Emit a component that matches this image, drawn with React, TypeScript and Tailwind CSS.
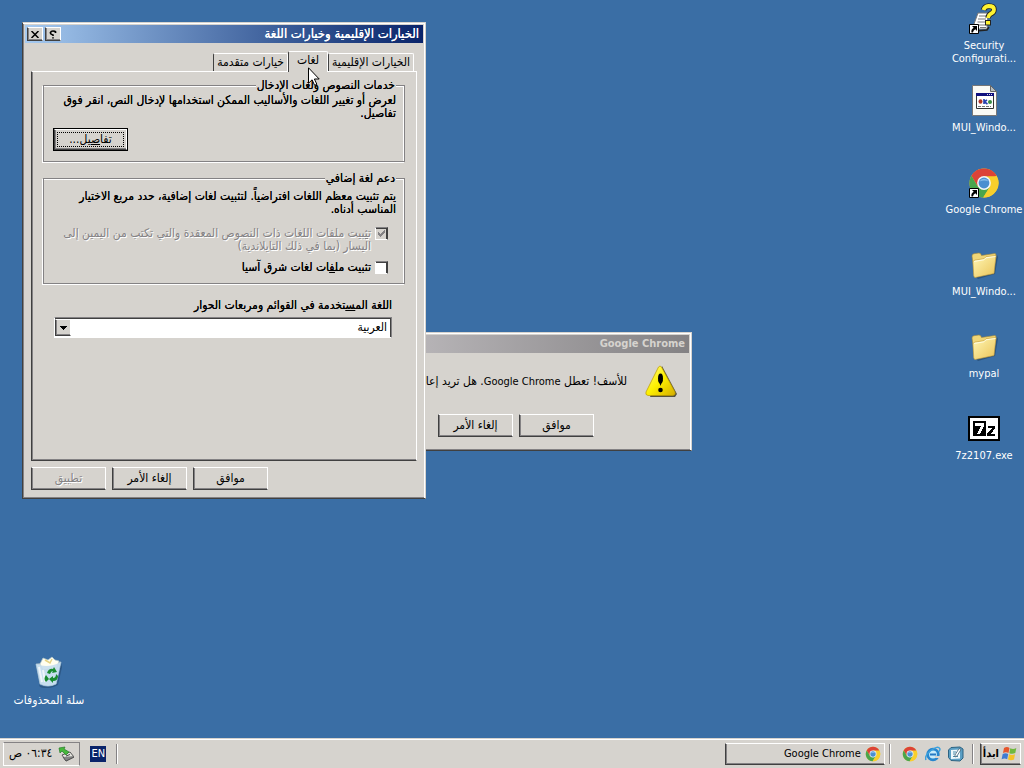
import React, { useState } from "react";

const raised =
  "bg-[#d6d3ce] border border-t-white border-r-white border-b-[#404040] border-l-[#404040] shadow-[inset_1px_-1px_0_#848284]";

function DialogButton({
  children,
  disabled,
  focused,
}: {
  children: React.ReactNode;
  disabled?: boolean;
  focused?: boolean;
}) {
  if (focused) {
    return (
      <button type="button" className="h-[23px] w-[75px] border border-black bg-black">
        <span className={`${raised} flex h-full items-center justify-center p-[2px]`}>
          <span className="flex h-full w-full items-center justify-center border border-dotted border-black">
            {children}
          </span>
        </span>
      </button>
    );
  }
  return (
    <button
      type="button"
      disabled={disabled}
      className={`${raised} flex h-[23px] w-[75px] items-center justify-center disabled:text-[#848284] disabled:[text-shadow:1px_1px_0_white]`}
    >
      {children}
    </button>
  );
}

function GroupBox({ title, children }: { title: string; children: React.ReactNode }) {
  return (
    <fieldset className="min-w-0 border border-[#848284] px-2 shadow-[-1px_1px_0_white,inset_-1px_1px_0_white]">
      <legend className="relative bg-[#d6d3ce] px-px leading-[13px]">{title}</legend>
      {children}
    </fieldset>
  );
}

function CheckRow({
  id,
  checked,
  disabled,
  children,
}: {
  id: string;
  checked?: boolean;
  disabled?: boolean;
  children: React.ReactNode;
}) {
  return (
    <div className="flex items-start gap-1">
      <span className="relative flex h-[13px] w-[13px] shrink-0">
        <input
          id={id}
          type="checkbox"
          defaultChecked={checked}
          disabled={disabled}
          className="peer h-[13px] w-[13px] appearance-none border border-b-white border-l-white border-r-[#404040] border-t-[#848284] bg-white shadow-[inset_-1px_1px_0_#404040] disabled:bg-[#d6d3ce]"
        />
        <svg
          viewBox="0 0 13 13"
          className="pointer-events-none absolute inset-0 hidden h-[13px] w-[13px] peer-checked:block"
          shapeRendering="crispEdges"
        >
          <path d="M3 5v3l2 2 5-5V2L5 7z" fill={disabled ? "#848284" : "#000"} />
        </svg>
      </span>
      <label
        htmlFor={id}
        className={disabled ? "whitespace-nowrap text-[#848284] [text-shadow:1px_1px_0_white]" : "whitespace-nowrap"}
      >
        {children}
      </label>
    </div>
  );
}

function ChromeLogo({ className }: { className: string }) {
  return (
    <svg viewBox="0 0 32 32" className={className}>
      <circle cx="16" cy="16" r="14.5" fill="#f8cf2c" />
      <path d="M16 16 28.6 8.8A14.5 14.5 0 0 0 3.4 8.8L9.8 19.6z" fill="#dc4337" />
      <path d="M3.4 8.8A14.5 14.5 0 0 0 15.2 30.5L22.2 19.6H9.8z" fill="#4aa54c" />
      <path d="M16 9.2H28.8A14.5 14.5 0 0 1 15.2 30.5L22 19.4z" fill="#f8cf2c" />
      <circle cx="16" cy="16" r="6.9" fill="#f2f5f8" />
      <circle cx="16" cy="16" r="5.4" fill="#4a8fd0" />
      <path d="M11.5 14.5a5 5 0 0 1 9 0q-4-2-9 0z" fill="#86bdea" />
    </svg>
  );
}

function ShortcutArrow() {
  return (
    <g>
      <path d="M1.500 21.500h9v9h-9z" fill="#fff" stroke="#000" />
      <path d="M4 23h5v5l-1.700-1.700Q5 27.500 5 29.500H3.500q-.800-3 2.200-4.800z" fill="#000" />
    </g>
  );
}

function SecurityIcon() {
  return (
    <svg viewBox="0 0 32 32" className="h-8 w-8">
      <path d="M10 10h10l-1 16H6v-5z" fill="#fff" stroke="#777" />
      <path d="M11 13h7M10 16h8M9.500 19h8M9 22h8M12 24.500h6" stroke="#777" />
      <path d="m8 28 11-1 2-3" fill="none" stroke="#222" strokeWidth="1.500" />
      <path
        d="M15.500 7q1-3.500 5-4 5.500 0 5.500 3.500 0 3-3.500 4.500-2 1-2.500 4"
        fill="none"
        stroke="#222"
        strokeWidth="5.500"
      />
      <path
        d="M15.500 7q1-3.500 5-4 5.500 0 5.500 3.500 0 3-3.500 4.500-2 1-2.500 4"
        fill="none"
        stroke="#fff332"
        strokeWidth="3.800"
      />
      <rect x="17.500" y="17.500" width="5" height="4.500" fill="#fff332" stroke="#222" />
      <ShortcutArrow />
    </svg>
  );
}

function SettingsFileIcon() {
  return (
    <svg viewBox="0 0 32 32" className="h-8 w-8">
      <path d="M4.500.5h18l6 6v24h-24z" fill="#fafaf5" stroke="#777" />
      <path d="M22.500.5v6h6z" fill="#b8bfc0" stroke="#666" />
      <path d="M8.500 8.500h17v15h-17z" fill="#fff" stroke="#333" />
      <path d="M8 8h18v3H8z" fill="#10107e" />
      <path d="M19 9.500h1M21 9.500h1M23 9.500h1" stroke="#ddd" />
      <ellipse cx="12.500" cy="16.500" rx="2" ry="2.300" fill="#b03528" />
      <path d="M16 14v5M16 17l3-2M16.500 17l3 2" stroke="#263fb0" strokeWidth="1.600" />
      <circle cx="22" cy="17" r="2" fill="#368b42" />
      <path d="M10 21.500h13" stroke="#777" strokeDasharray="3 1" />
    </svg>
  );
}

function ChromeShortcut() {
  return (
    <span className="relative block h-8 w-8">
      <ChromeLogo className="h-8 w-8" />
      <svg viewBox="0 0 32 32" className="absolute inset-0 h-8 w-8">
        <ShortcutArrow />
      </svg>
    </span>
  );
}

function FolderIcon() {
  return (
    <svg viewBox="0 0 32 32" className="h-8 w-8">
      <defs>
        <linearGradient id="folder" x1="0" y1="0" x2="1" y2="1">
          <stop offset="0" stopColor="#fff7b5" />
          <stop offset="1" stopColor="#eac357" />
        </linearGradient>
      </defs>
      <path d="M8 28 25 23 29 6 30 8 27 25 10 30z" fill="#24496f" opacity=".7" />
      <path d="M4 7q0-2 2-2.300L11 4q2 0 2.500 2.500L27 4.500q1 0 1 2L25 23 7 28z" fill="#f0d677" stroke="#a98935" strokeWidth=".6" />
      <path d="M5 12.500 7 11l9-1.300 2-2L28 6.500l-2 18L7 28.500q-1 0-1.300-2z" fill="url(#folder)" stroke="#c39c3d" strokeWidth=".6" />
      <path d="M6 12.500l10-1.700 2-2 9.500-1.300" stroke="#fffce0" fill="none" />
    </svg>
  );
}

function SevenZipIcon() {
  return (
    <svg viewBox="0 0 32 32" className="h-8 w-8" shapeRendering="crispEdges">
      <path d="M0 3h32v25H0z" fill="#000" />
      <path d="M2 5h28v21H2z" fill="#fff" />
      <path d="M5 8h13v15H5z" fill="#000" />
      <path d="M7 10h9v3l-4 8H9l4-8H7z" fill="#fff" />
      <path d="M20 13h7v2l-4 6h4v2h-8v-2l5-6h-4z" fill="#000" />
    </svg>
  );
}

function RecycleBin() {
  return (
    <svg viewBox="0 0 32 32" className="h-8 w-8">
      <path d="M6 29q10 4 18-1l4-21 1 4-4 18q-9 5-18 2z" fill="#234a72" opacity=".6" />
      <path d="M3 8 28 6 23 28Q15 32 7 28z" fill="#d5e6ef" stroke="#8eabc1" />
      <path d="M7 8 10 2l5 2 4-3 3 3 4 1-2 7-14 2z" fill="#fffef0" stroke="#b8c8c8" strokeWidth=".7" />
      <path d="M12 4l5 3 2-4" stroke="#e5d383" fill="none" strokeWidth="1.500" />
      <path d="M3 8q12 5 25-2l-5 22q-8 4-16 0z" fill="#c3dcee" opacity=".85" />
      <path d="m6 11 3 15M10 14l2 12" stroke="#fff" strokeWidth="2" opacity=".7" />
      <path d="M14 17q2-5 6-4l1-2 3 5-5 1 1-2q-2 0-3 3zM23 18l2 2q0 5-5 5v2l-4-4 4-3v2q3 0 3-4zM13 19l3 4-3 3q-3-3 0-7z" fill="#198b30" />
    </svg>
  );
}

function WarningIcon() {
  return (
    <svg viewBox="0 0 32 32" className="h-8 w-8">
      <defs>
        <linearGradient id="warn" x1="0" y1="0" x2="1" y2="1">
          <stop offset="0" stopColor="#fffb8a" />
          <stop offset=".5" stopColor="#fdf000" />
          <stop offset="1" stopColor="#d5ac00" />
        </linearGradient>
      </defs>
      <path d="M17 1 32 29 30 32H5z" fill="#55523e" />
      <path d="M13.500 2q1.500-2 3 0L30 27q1 3-2 3.500H3Q0 30 1 27z" fill="url(#warn)" stroke="#b99a00" strokeWidth=".7" />
      <ellipse cx="15.500" cy="13.500" rx="2.500" ry="5" fill="#000" />
      <path d="m13.500 15 2 6 2-6z" fill="#000" />
      <circle cx="15.500" cy="25" r="2.300" fill="#000" />
    </svg>
  );
}

function ExplorerIcon() {
  return (
    <svg viewBox="0 0 16 16" className="h-4 w-4">
      <circle cx="8" cy="8.500" r="5.300" fill="#c7ecfb" stroke="#2786ce" strokeWidth="2.800" />
      <path d="M5 7.500h6v2H5z" fill="#2579c3" />
      <path d="M10 10h5v2h-5z" fill="#d6d3ce" />
      <path d="M1 14Q-1 10 6 4.500T15 3q0 1-1 2.500" fill="none" stroke="#3aa0dd" strokeWidth="1.500" />
    </svg>
  );
}

function ShowDesktopIcon() {
  return (
    <svg viewBox="0 0 16 16" className="h-4 w-4">
      <path d="M3 1.500 12 1l3 2v9l-3 3-9-.500-2.500-3V4z" fill="#5b9fc4" stroke="#2c6382" />
      <path d="M3 4 12 3.500v9L3 13z" fill="#eef8fb" />
      <path d="M5 6h3M5 8h2M5 10.500h5" stroke="#4a8cac" />
      <path d="m7 9 4-6.500 2 1-4 6.500-2 1z" fill="#fff" stroke="#385d72" strokeWidth=".8" />
    </svg>
  );
}

function WindowsFlag() {
  return (
    <svg viewBox="0 0 18 16" className="h-4 w-[18px]">
      <path d="M4 2q3-2 5.500 0L8.500 7Q6 5.500 3 7z" fill="#e6552c" />
      <path d="M10.300 2.300q3 1.500 6-.3l-1 5q-3 1.500-6 .2z" fill="#6fb93d" />
      <path d="M2.700 8q3-1.600 5.500 0l-1 5.300q-2.500-1.600-5.600 0z" fill="#3f7bd2" />
      <path d="M9 8.300q3 1.500 6 0L14 13.600q-3 1.500-6 0z" fill="#f4c227" />
    </svg>
  );
}

function RemoveHardwareIcon() {
  return (
    <svg viewBox="0 0 16 16" className="h-4 w-4">
      <path d="m4 9 8-3 4 5-8 4z" fill="#e6e6df" stroke="#555" />
      <path d="m5 11 3 4 8-4v-1" fill="#858585" stroke="#444" strokeWidth=".7" />
      <path d="m8 10 4-1.500" stroke="#444" />
      <path d="M1 2 7 1l-1 2 5 3-3 3-4-4-2 2z" fill="#47b83b" stroke="#257b28" strokeWidth=".7" />
    </svg>
  );
}

function DesktopItem({ icon, label, arabic }: { icon: React.ReactNode; label: string; arabic?: boolean }) {
  return (
    <a href="#" className="flex h-[82px] w-[76px] flex-col items-center gap-1 text-center text-white">
      {icon}
      <span dir="auto" className={arabic ? "whitespace-nowrap text-[12px] leading-4" : "leading-[13px]"}>
        {label}
      </span>
    </a>
  );
}

function Separator() {
  return <span className="block h-5 w-[2px] shrink-0 border-l border-r border-l-[#848284] border-r-white" />;
}

const tabs = ["الخيارات الإقليمية", "لغات", "خيارات متقدمة"];

function RegionalDialog() {
  const [active, setActive] = useState(1);
  const winFrame =
    "border border-b-[#404040] border-l-[#404040] border-r-[#d6d3ce] border-t-[#d6d3ce] shadow-[inset_-1px_1px_0_white,inset_1px_-1px_0_#848284]";
  return (
    <section
      dir="rtl"
      aria-label="الخيارات الإقليمية وخيارات اللغة"
      className={`absolute left-[22px] top-[22px] w-[404px] bg-[#d6d3ce] p-[2px] text-[12px] leading-[13px] [text-shadow:0_0_0_currentColor] ${winFrame}`}
    >
      <header className="flex h-[18px] items-center gap-[2px] bg-linear-to-l from-[#0a246a] to-[#a6caf0] px-[2px]">
        <h1 className="flex-1 px-[2px] text-[13px] leading-[18px] text-white">الخيارات الإقليمية وخيارات اللغة</h1>
        <button type="button" aria-label="تعليمات" className={`${raised} flex h-[14px] w-4 items-center justify-center`}>
          <svg viewBox="0 0 8 9" className="h-[9px] w-2">
            <path d="M6.500 3V1.800Q6 1 4 1T1.500 2.500 4 5v1M4 7.200v1.300" fill="none" stroke="#000" strokeWidth="1.700" />
          </svg>
        </button>
        <button type="button" aria-label="إغلاق" className={`${raised} flex h-[14px] w-4 items-center justify-center`}>
          <svg viewBox="0 0 8 7" className="h-[7px] w-2">
            <path d="m.5 0 7 7m0-7-7 7" stroke="#000" strokeWidth="1.500" />
          </svg>
        </button>
      </header>

      <div className="px-[6px] pb-[6px] pt-2">
        <div role="tablist" className="flex h-5 items-end px-[3px]">
          {tabs.map((tab, i) => (
            <button
              key={tab}
              type="button"
              role="tab"
              aria-selected={i === active}
              onClick={() => setActive(i)}
              className={
                i === active
                  ? "relative -mb-px h-[21px] rounded-t-[2px] border-l border-r border-t border-l-[#404040] border-r-white border-t-white bg-[#d6d3ce] px-2 pb-1"
                  : "h-[18px] rounded-t-[2px] border-l border-r border-t border-l-[#404040] border-r-white border-t-white px-[3px]"
              }
            >
              {tab}
            </button>
          ))}
        </div>

        <div
          role="tabpanel"
          className="h-[390px] border border-b-[#404040] border-l-[#404040] border-r-white border-t-white px-[11px] pt-[7px] shadow-[inset_1px_-1px_0_#848284]"
        >
          <GroupBox title="خدمات النصوص ولغات الإدخال">
            <p className="whitespace-nowrap pt-[2px]">
              لعرض أو تغيير اللغات والأساليب الممكن استخدامها لإدخال النص، انقر فوق
              <br />
              تفاصيل.
            </p>
            <div className="flex justify-end pb-[10px] pl-px pt-2">
              <DialogButton focused>
                <span>تفا<u>ص</u>يل...</span>
              </DialogButton>
            </div>
          </GroupBox>

          <div className="pt-[10px]">
            <GroupBox title="دعم لغة إضافي">
              <p className="whitespace-nowrap pt-[5px]">
                يتم تثبيت معظم اللغات افتراضياً. لتثبيت لغات إضافية، حدد مربع الاختيار
                <br />
                المناسب أدناه.
              </p>
              <div className="flex flex-col gap-2 px-2 pb-[9px] pt-[11px]">
                <CheckRow id="complex" checked disabled>
                  ت<u>ث</u>بيت ملفات اللغات ذات النصوص المعقدة والتي تكتب من اليمين إلى
                  <br />
                  اليسار (بما في ذلك التايلاندية)
                </CheckRow>
                <CheckRow id="asian">
                  تثبيت مل<u>ف</u>ات لغات شرق آسيا
                </CheckRow>
              </div>
            </GroupBox>
          </div>

          <div className="flex flex-col gap-[5px] pl-[11px] pr-[13px] pt-[15px]">
            <label htmlFor="ui-language">
              اللغة الم<u>س</u>تخدمة في القوائم ومربعات الحوار
            </label>
            <div className="relative">
              <select
                id="ui-language"
                className="h-[21px] w-full appearance-none border border-b-white border-l-white border-r-[#848284] border-t-[#848284] bg-white px-1 shadow-[inset_-1px_1px_0_#404040]"
              >
                <option>العربية</option>
              </select>
              <span className={`${raised} pointer-events-none absolute bottom-[2px] left-px top-[2px] flex w-4 items-center justify-center`}>
                <svg viewBox="0 0 7 4" className="h-1 w-[7px]" shapeRendering="crispEdges">
                  <path d="M0 0h7L3.500 4z" />
                </svg>
              </span>
            </div>
          </div>
        </div>

        <div className="flex justify-end gap-[6px] pt-[6px]">
          <DialogButton>موافق</DialogButton>
          <DialogButton>إلغاء الأمر</DialogButton>
          <DialogButton disabled>
            <span>تط<u>ب</u>يق</span>
          </DialogButton>
        </div>
      </div>
    </section>
  );
}

function CrashDialog() {
  return (
    <section
      dir="rtl"
      aria-label="Google Chrome"
      className="absolute left-[340px] top-[332px] w-[352px] border border-b-[#404040] border-l-[#404040] border-r-[#d6d3ce] border-t-[#d6d3ce] bg-[#d6d3ce] p-[2px] text-[12px] shadow-[inset_-1px_1px_0_white,inset_1px_-1px_0_#848284]"
    >
      <header className="h-[18px] bg-linear-to-l from-[#848284] to-[#c6c3c6] px-1">
        <h2 className="text-[11px] font-bold leading-[18px] text-[#d6d3ce]">Google Chrome</h2>
      </header>
      <div className="flex items-center gap-[18px] px-3 pt-3">
        <WarningIcon />
        <p className="whitespace-nowrap">
          للأسف! تعطل <span className="text-[11px]">Google Chrome</span>. هل تريد إعادة تشغيله الآن؟
        </p>
      </div>
      <div className="flex justify-center gap-[6px] pb-[11px] pt-[17px]">
        <DialogButton>موافق</DialogButton>
        <DialogButton>إلغاء الأمر</DialogButton>
      </div>
    </section>
  );
}

export default function App() {
  return (
    <div className="flex h-screen flex-col overflow-hidden bg-[#3a6ea5] font-['DejaVu_Sans_Condensed','DejaVu_Sans',sans-serif] text-[11px] leading-[13px] text-black">
      <main className="relative min-h-0 flex-1">
        <nav className="absolute right-[2px] top-[3px] flex flex-col">
          <DesktopItem icon={<SecurityIcon />} label="Security Configurati..." />
          <DesktopItem icon={<SettingsFileIcon />} label="MUI_Windo..." />
          <DesktopItem icon={<ChromeShortcut />} label={"Google\u00a0Chrome"} />
          <DesktopItem icon={<FolderIcon />} label="MUI_Windo..." />
          <DesktopItem icon={<FolderIcon />} label="mypal" />
          <DesktopItem icon={<SevenZipIcon />} label="7z2107.exe" />
        </nav>
        <div className="absolute bottom-0 left-[11px]">
          <DesktopItem icon={<RecycleBin />} label="سلة المحذوفات" arabic />
        </div>
        <CrashDialog />
        <RegionalDialog />
        <svg viewBox="0 0 12 19" className="pointer-events-none absolute left-[308px] top-[67px] h-[19px] w-3">
          <path d="M.5.800v15.500l3.600-3.500 2.500 5.500 2.300-1-2.500-5.300h4.800z" fill="#fff" stroke="#000" />
        </svg>
      </main>

      <footer
        dir="rtl"
        className="flex h-[30px] shrink-0 items-center gap-[6px] border-t border-[#d6d3ce] bg-[#d6d3ce] px-[3px] shadow-[inset_0_1px_0_white]"
      >
        <button type="button" className={`${raised} flex h-[22px] items-center gap-px px-[2px] font-bold`}>
          <WindowsFlag />
          ابدأ
        </button>
        <Separator />
        <div className="flex items-center gap-[7px] px-[2px]">
          <a href="#" aria-label="سطح المكتب"><ShowDesktopIcon /></a>
          <a href="#" aria-label="Internet Explorer"><ExplorerIcon /></a>
          <a href="#" aria-label="Google Chrome"><ChromeLogo className="h-4 w-4" /></a>
        </div>
        <div className="flex flex-1 items-center gap-1">
          <span className="pr-[3px]"><Separator /></span>
          <button type="button" className={`${raised} flex h-[22px] w-40 items-center gap-1 px-[3px]`}>
            <ChromeLogo className="h-4 w-4" />
            Google Chrome
          </button>
        </div>
        <Separator />
        <button type="button" className="mx-1 h-4 w-4 bg-[#0a246a] text-white">EN</button>
        <div className="flex h-6 items-center gap-[6px] border border-b-white border-l-white border-r-[#848284] border-t-[#848284] px-[5px]">
          <RemoveHardwareIcon />
          <time className="text-[12px]">٠٦:٣٤ ص</time>
        </div>
      </footer>
    </div>
  );
}
